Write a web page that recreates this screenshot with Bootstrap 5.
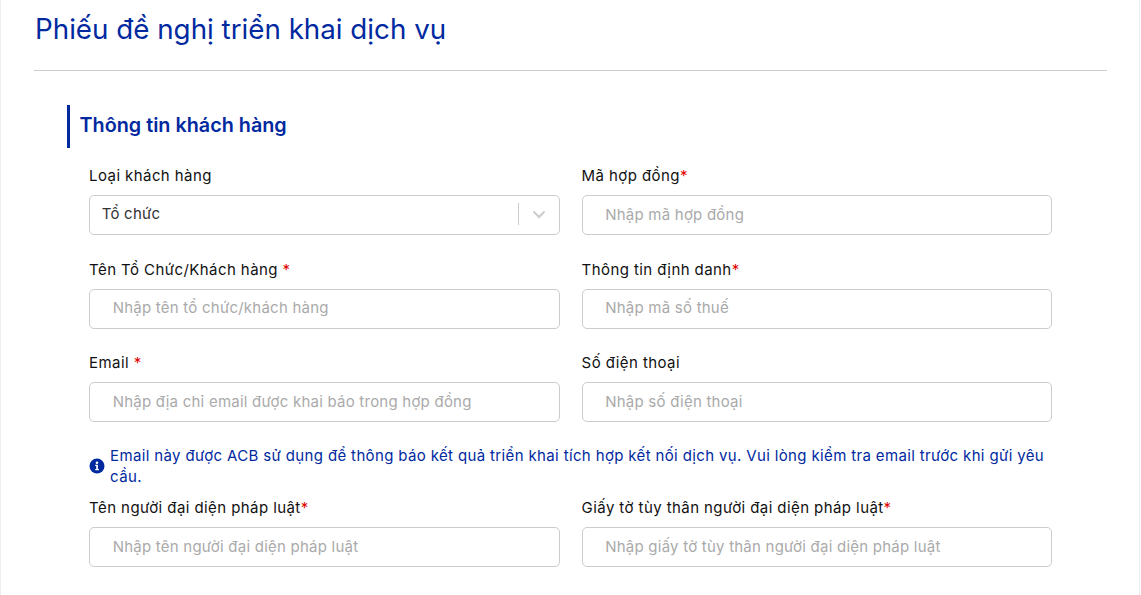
<!DOCTYPE html>
<html lang="vi">
<head>
<meta charset="utf-8">
<title>Phiếu đề nghị triển khai dịch vụ</title>
<link href="https://cdn.jsdelivr.net/npm/bootstrap@5.3.0/dist/css/bootstrap.min.css" rel="stylesheet">
<style>
html,body{height:595px;overflow:hidden;background:#fff}
body{font-family:Inter,"Noto Sans",sans-serif;color:#111}
.sheet{margin:0 1px 0 0;height:595px;border-left:1px solid #eee;border-right:1px solid #eee;padding:0 32px 0 33px;overflow:hidden}
.page-title{font-size:27.750px;font-weight:400;line-height:34px;color:#00299f;margin:12px 0 0 1px;height:58px}
.rule{height:1px;background:#ccc;margin:0}
.sect{margin:34px 0 0 33px;height:43px;border-left:3px solid #00299f;padding-left:9.500px;font-size:19.800px;font-weight:600;line-height:41.500px;color:#00299f}
.fields{margin:17px 0 0 44.100px;width:985px;--bs-gutter-x:22px;--bs-gutter-y:0}
.fld{height:93.500px}
.fld label{display:block;font-size:15px;letter-spacing:.42px;line-height:21px;margin-bottom:9px;height:21px;color:#111}
.req{color:#e00000}
.box{height:40px;border:1px solid #ccc;border-radius:5px;font-size:15px;letter-spacing:.23px;padding:0 22px 2px 22.600px;color:#333;box-shadow:none}
.box::placeholder{color:#aaa;opacity:1}
.pick{padding:0 0 2px 11.600px;color:#333}
.pick-sep{width:1px;height:22px;background:#ccc}
.pick-arrow{width:40px}
.note{margin-top:-1px;color:#00299f;font-size:15px;letter-spacing:.36px;line-height:21px;height:52.500px;padding-bottom:10.500px}
.note svg{flex:none;margin-right:5px}
</style>
</head>
<body>
<div class="sheet">
  <h1 class="page-title">Phiếu đề nghị triển khai dịch vụ</h1>
  <div class="rule"></div>
  <h2 class="sect">Thông tin khách hàng</h2>
  <div class="row fields">
    <div class="col-6 fld"><label>Loại khách hàng</label>
      <div class="box pick d-flex align-items-center"><span class="flex-grow-1">Tổ chức</span><span class="pick-sep"></span>
        <span class="pick-arrow d-flex justify-content-center"><svg width="14" height="9" viewBox="0 0 14 9"><path d="M1.500 1.500 7 7l5.500-5.500" fill="none" stroke="#ccc" stroke-width="2"/></svg></span></div></div>
    <div class="col-6 fld"><label>Mã hợp đồng<span class="req">*</span></label><input class="form-control box" placeholder="Nhập mã hợp đồng"></div>
    <div class="col-6 fld"><label>Tên Tổ Chức/Khách hàng <span class="req">*</span></label><input class="form-control box" placeholder="Nhập tên tổ chức/khách hàng"></div>
    <div class="col-6 fld"><label>Thông tin định danh<span class="req">*</span></label><input class="form-control box" placeholder="Nhập mã số thuế"></div>
    <div class="col-6 fld"><label>Email <span class="req">*</span></label><input class="form-control box" placeholder="Nhập địa chỉ email được khai báo trong hợp đồng"></div>
    <div class="col-6 fld"><label>Số điện thoại</label><input class="form-control box" placeholder="Nhập số điện thoại"></div>
    <div class="col-12 note d-flex align-items-center">
      <svg width="16" height="16" viewBox="0 0 16 16"><circle cx="8" cy="8" r="7.500" fill="#00299f"/><circle cx="8" cy="4.700" r="1.300" fill="#fff"/><path d="M6.200 6.800h2.700v4.200h1v1.300H6.200V11h1V8.100h-1z" fill="#fff"/></svg>
      <span>Email này được ACB sử dụng để thông báo kết quả triển khai tích hợp kết nối dịch vụ. Vui lòng kiểm tra email trước khi gửi yêu cầu.</span>
    </div>
    <div class="col-6 fld"><label>Tên người đại diện pháp luật<span class="req">*</span></label><input class="form-control box" placeholder="Nhập tên người đại diện pháp luật"></div>
    <div class="col-6 fld"><label>Giấy tờ tùy thân người đại diện pháp luật<span class="req">*</span></label><input class="form-control box" placeholder="Nhập giấy tờ tùy thân người đại diện pháp luật"></div>
  </div>
</div>
</body>
</html>
